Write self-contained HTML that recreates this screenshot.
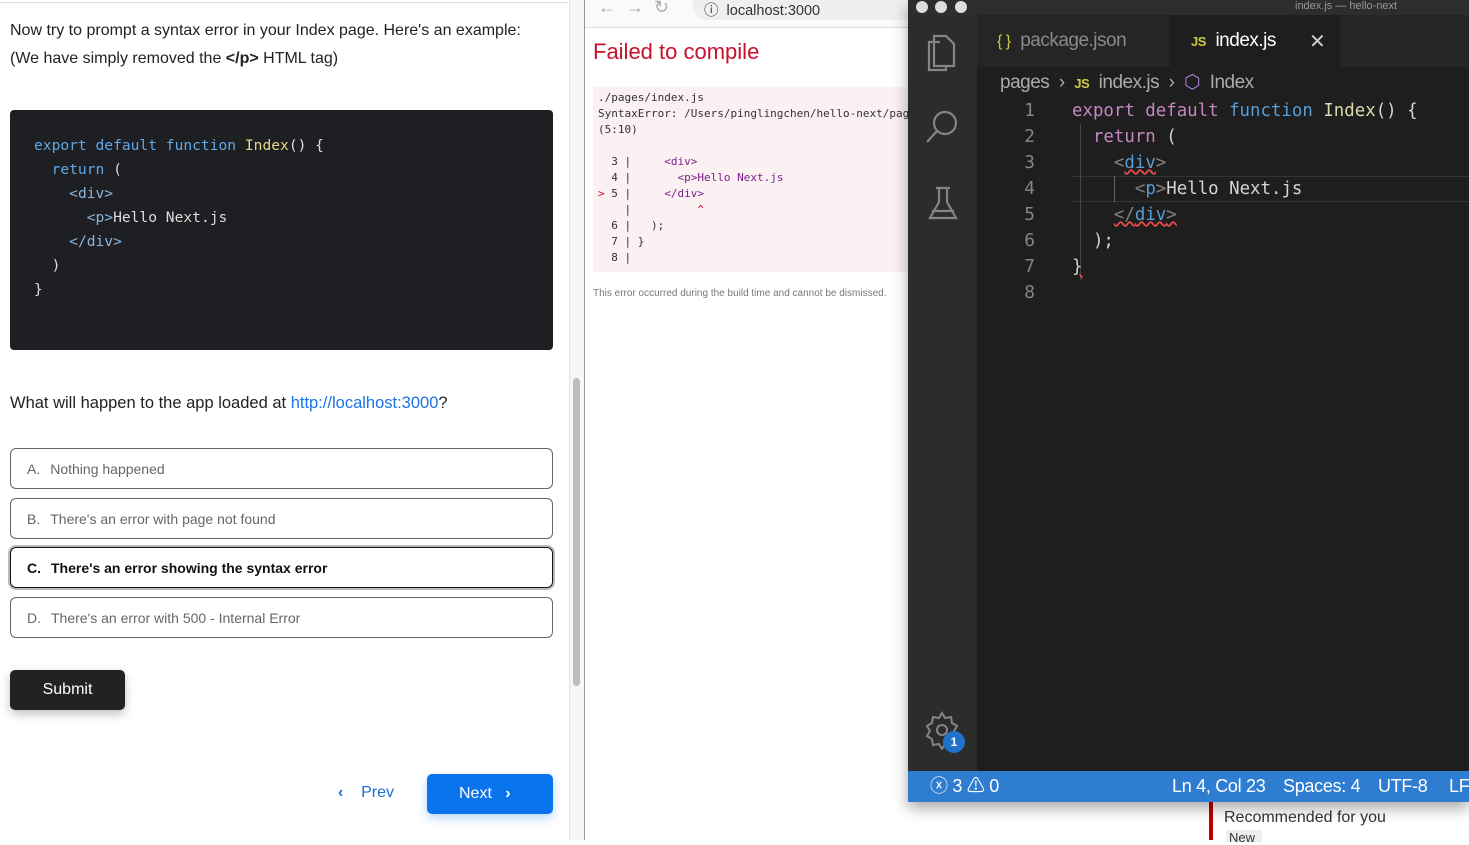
<!DOCTYPE html>
<html><head><style>
*{margin:0;padding:0;box-sizing:border-box}
body{width:1469px;height:840px;overflow:hidden;background:#fff;font-family:"Liberation Sans",sans-serif;position:relative}
.abs{position:absolute}
.mono{font-family:"DejaVu Sans Mono","Liberation Mono",monospace;white-space:pre}
.opt{position:absolute;left:10px;width:543px;height:41px;border:1px solid #666;border-radius:6px;font-size:14px;color:#666;padding:12px 16px;line-height:16px}
.opt b{font-weight:normal;margin-right:10px}
</style></head><body>
<!-- left panel -->
<div class="abs" style="left:0;top:0;width:569px;height:3px;border-bottom:1px solid #ddd"></div>
<div class="abs" style="left:10px;top:17px;font-size:16px;line-height:28px;color:#222">Now try to prompt a syntax error in your Index page. Here's an example:<br>(We have simply removed the <b>&lt;/p&gt;</b> HTML tag)</div>
<div class="abs mono" style="left:10px;top:110px;width:543px;height:240px;background:#1e1f22;border-radius:4px;padding:24px 24px;font-size:14.6px;line-height:24px;color:#ddd"><span style="color:#5fa8e8">export default function</span> <span style="color:#e8d68a">Index</span>() {
  <span style="color:#5fa8e8">return</span> (
    <span style="color:#8ab4d8">&lt;div&gt;</span>
      <span style="color:#8ab4d8">&lt;p&gt;</span>Hello Next.js
    <span style="color:#8ab4d8">&lt;/div&gt;</span>
  )
}</div>
<div class="abs" style="left:10px;top:394px;font-size:16.5px;color:#222">What will happen to the app loaded at <span style="color:#1a73e8">http://localhost:3000</span>?</div>
<div class="opt" style="top:448px"><b>A.</b>Nothing happened</div>
<div class="opt" style="top:498px"><b>B.</b>There's an error with page not found</div>
<div class="opt" style="top:547px;border:1.5px solid #111;box-shadow:0 0 0 2px #bbb;color:#111;font-weight:bold"><b style="font-weight:bold">C.</b>There's an error showing the syntax error</div>
<div class="opt" style="top:597px"><b>D.</b>There's an error with 500 - Internal Error</div>
<div class="abs" style="left:10px;top:670px;width:115px;height:40px;background:#222;border-radius:5px;color:#fff;font-size:16px;text-align:center;line-height:40px;box-shadow:0 4px 10px rgba(0,0,0,.25)">Submit</div>
<div class="abs" style="left:338px;top:784px;font-size:16px;color:#1a6fd8"><b>‹</b>&nbsp;&nbsp;&nbsp;&nbsp;Prev</div>
<div class="abs" style="left:427px;top:774px;width:126px;height:40px;background:#0a74ec;border-radius:5px;color:#fff;font-size:16px;line-height:40px;padding-left:32px;box-shadow:0 4px 10px rgba(10,116,236,.3)">Next&nbsp;&nbsp;&nbsp;<b>›</b></div>
<div class="abs" style="left:569px;top:0;width:15px;height:840px;background:#f6f6f6;border-left:1px solid #e4e4e4"></div>
<div class="abs" style="left:573px;top:378px;width:7px;height:308px;background:#bcbcbc;border-radius:4px"></div>
<div class="abs" style="left:584px;top:0;width:1px;height:840px;background:#999"></div>
<!-- browser -->
<div class="abs" style="left:585px;top:0;width:323px;height:28px;background:#fafafa;border-bottom:1px solid #ddd"></div>
<div class="abs" style="left:598px;top:-3px;font-size:18px;color:#aaa">←&nbsp;&nbsp;→&nbsp;&nbsp;↻</div>
<div class="abs" style="left:693px;top:-10px;width:220px;height:30px;background:#efefef;border-radius:14px"></div>
<div class="abs" style="left:704px;top:-1px;font-size:14.5px;color:#333">ⓘ&nbsp; localhost:3000</div>
<div class="abs" style="left:593px;top:39px;font-size:22px;color:#c8102e">Failed to compile</div>
<div class="abs mono" style="left:593px;top:87px;width:315px;height:185px;background:#fbf0f2;padding:3px 5px;font-size:11px;line-height:16px;color:#333;overflow:hidden">./pages/index.js
SyntaxError: /Users/pinglingchen/hello-next/pages
(5:10)

  3 |     <span style="color:#7a1f8a">&lt;div&gt;</span>
  4 |       <span style="color:#7a1f8a">&lt;p&gt;Hello Next.js</span>
<span style="color:#c8102e">&gt;</span> 5 |     <span style="color:#7a1f8a">&lt;/div&gt;</span>
    |          <span style="color:#c8102e">^</span>
  6 |   );
  7 | }
  8 |</div>
<div class="abs" style="left:593px;top:288px;font-size:10px;color:#777;white-space:nowrap;width:315px;overflow:hidden">This error occurred during the build time and cannot be dismissed.</div>
<!-- below vscode -->
<div class="abs" style="left:1209px;top:802px;width:4px;height:38px;background:#b00"></div>
<div class="abs" style="left:1224px;top:809px;font-size:16px;color:#333">Recommended for you</div>
<div class="abs" style="left:1226px;top:830px;width:36px;height:12px;background:#eee;font-size:13px;color:#333;padding-left:3px">New</div>
<!-- vscode -->
<div class="abs" style="left:908px;top:0;width:561px;height:802px;background:#1e1e1e;box-shadow:0 6px 14px rgba(0,0,0,.35)"></div>
<div class="abs" style="left:908px;top:0;width:561px;height:15px;background:#2d2d2d"></div>
<div class="abs" style="left:916px;top:1px;width:12px;height:12px;border-radius:50%;background:#ddd"></div>
<div class="abs" style="left:935px;top:1px;width:12px;height:12px;border-radius:50%;background:#ddd"></div>
<div class="abs" style="left:955px;top:1px;width:12px;height:12px;border-radius:50%;background:#ddd"></div>
<div class="abs" style="left:1295px;top:0;font-size:11px;color:#999;line-height:13px">index.js — hello-next</div>
<div class="abs" style="left:908px;top:15px;width:69px;height:756px;background:#2c2c2c"></div>
<svg class="abs" style="left:920px;top:28px" width="46" height="210" fill="none" stroke="#858585" stroke-width="2.2">
<path d="M14 8h12l8 8v22H14z M20 14h-11v28h17v-4"/>
<circle cx="25" cy="95" r="11"/><path d="M17 103l-10 11"/>
<path d="M16 160h14 M19 160v14l-9 16h26l-9-16v-14 M12 183h22"/>
</svg>
<svg class="abs" style="left:922px;top:710px" width="40" height="40" fill="none" stroke="#858585" stroke-width="2"><path d="M20 3l3 5 6-1 1 6 5 3-3 5 3 5-5 3-1 6-6-1-3 5-3-5-6 1-1-6-5-3 3-5-3-5 5-3 1-6 6 1z"/><circle cx="20" cy="20" r="5"/></svg>
<div class="abs" style="left:943px;top:731px;width:22px;height:22px;border-radius:50%;background:#1f72c7;color:#fff;font-size:12px;font-weight:bold;text-align:center;line-height:22px">1</div>
<div class="abs" style="left:977px;top:15px;width:492px;height:52px;background:#252526"></div>
<div class="abs" style="left:1170px;top:15px;width:170px;height:52px;background:#1e1e1e"></div>
<div class="abs" style="left:997px;top:30px;font-size:19px;color:#8a8a8a;letter-spacing:-.5px"><span style="color:#cbcb41;font-size:16px">{ }</span>&nbsp; package.json</div>
<div class="abs" style="left:1191px;top:30px;font-size:19px;color:#fff;letter-spacing:-.5px"><span style="color:#cbcb41;font-size:13px;font-weight:bold">JS</span>&nbsp; index.js</div>
<div class="abs" style="left:1309px;top:29px;font-size:20px;color:#ccc">✕</div>
<div class="abs" style="left:1000px;top:71px;font-size:19px;color:#aaa;letter-spacing:-.5px">pages &nbsp;›&nbsp; <span style="color:#cbcb41;font-size:13px;font-weight:bold">JS</span>&nbsp; index.js &nbsp;›&nbsp; <span style="color:#b180d7">⬡</span>&nbsp; Index</div>
<div class="abs mono" style="left:1010px;top:98px;width:25px;text-align:right;font-size:17.8px;line-height:26px;color:#858585">1
2
3
4
5
6
7
8</div>
<div class="abs" style="left:1072px;top:176px;width:397px;height:26px;border-top:1px solid #333;border-bottom:1px solid #333"></div>
<div class="abs" style="left:1080px;top:124px;width:1px;height:156px;background:#444"></div>
<div class="abs" style="left:1114px;top:176px;width:1px;height:26px;background:#666"></div>
<div class="abs mono" style="left:1072px;top:98px;font-size:17.4px;line-height:26px;color:#d4d4d4"><span style="color:#c586c0">export default</span> <span style="color:#569cd6">function</span> <span style="color:#dcdcaa">Index</span>() {
  <span style="color:#c586c0">return</span> (
    <span style="color:#808080">&lt;</span><span style="color:#569cd6;text-decoration:underline wavy #f14c4c">div</span><span style="color:#808080">&gt;</span>
      <span style="color:#808080">&lt;</span><span style="color:#569cd6">p</span><span style="color:#808080">&gt;</span>Hello Next.js
    <span style="text-decoration:underline wavy #f14c4c"><span style="color:#808080">&lt;/</span><span style="color:#569cd6">div</span><span style="color:#808080">&gt;</span></span>
  );
<span style="text-decoration:underline wavy #f14c4c">}</span></div>
<div class="abs" style="left:908px;top:771px;width:561px;height:31px;background:#2f7dd1;color:#fff;font-size:18px;line-height:31px;letter-spacing:-.3px">
<span class="abs" style="left:22px">ⓧ 3 ⚠ 0</span>
<span class="abs" style="left:264px">Ln 4, Col 23</span>
<span class="abs" style="left:375px">Spaces: 4</span>
<span class="abs" style="left:470px">UTF-8</span>
<span class="abs" style="left:541px">LF</span>
</div>
</body></html>
